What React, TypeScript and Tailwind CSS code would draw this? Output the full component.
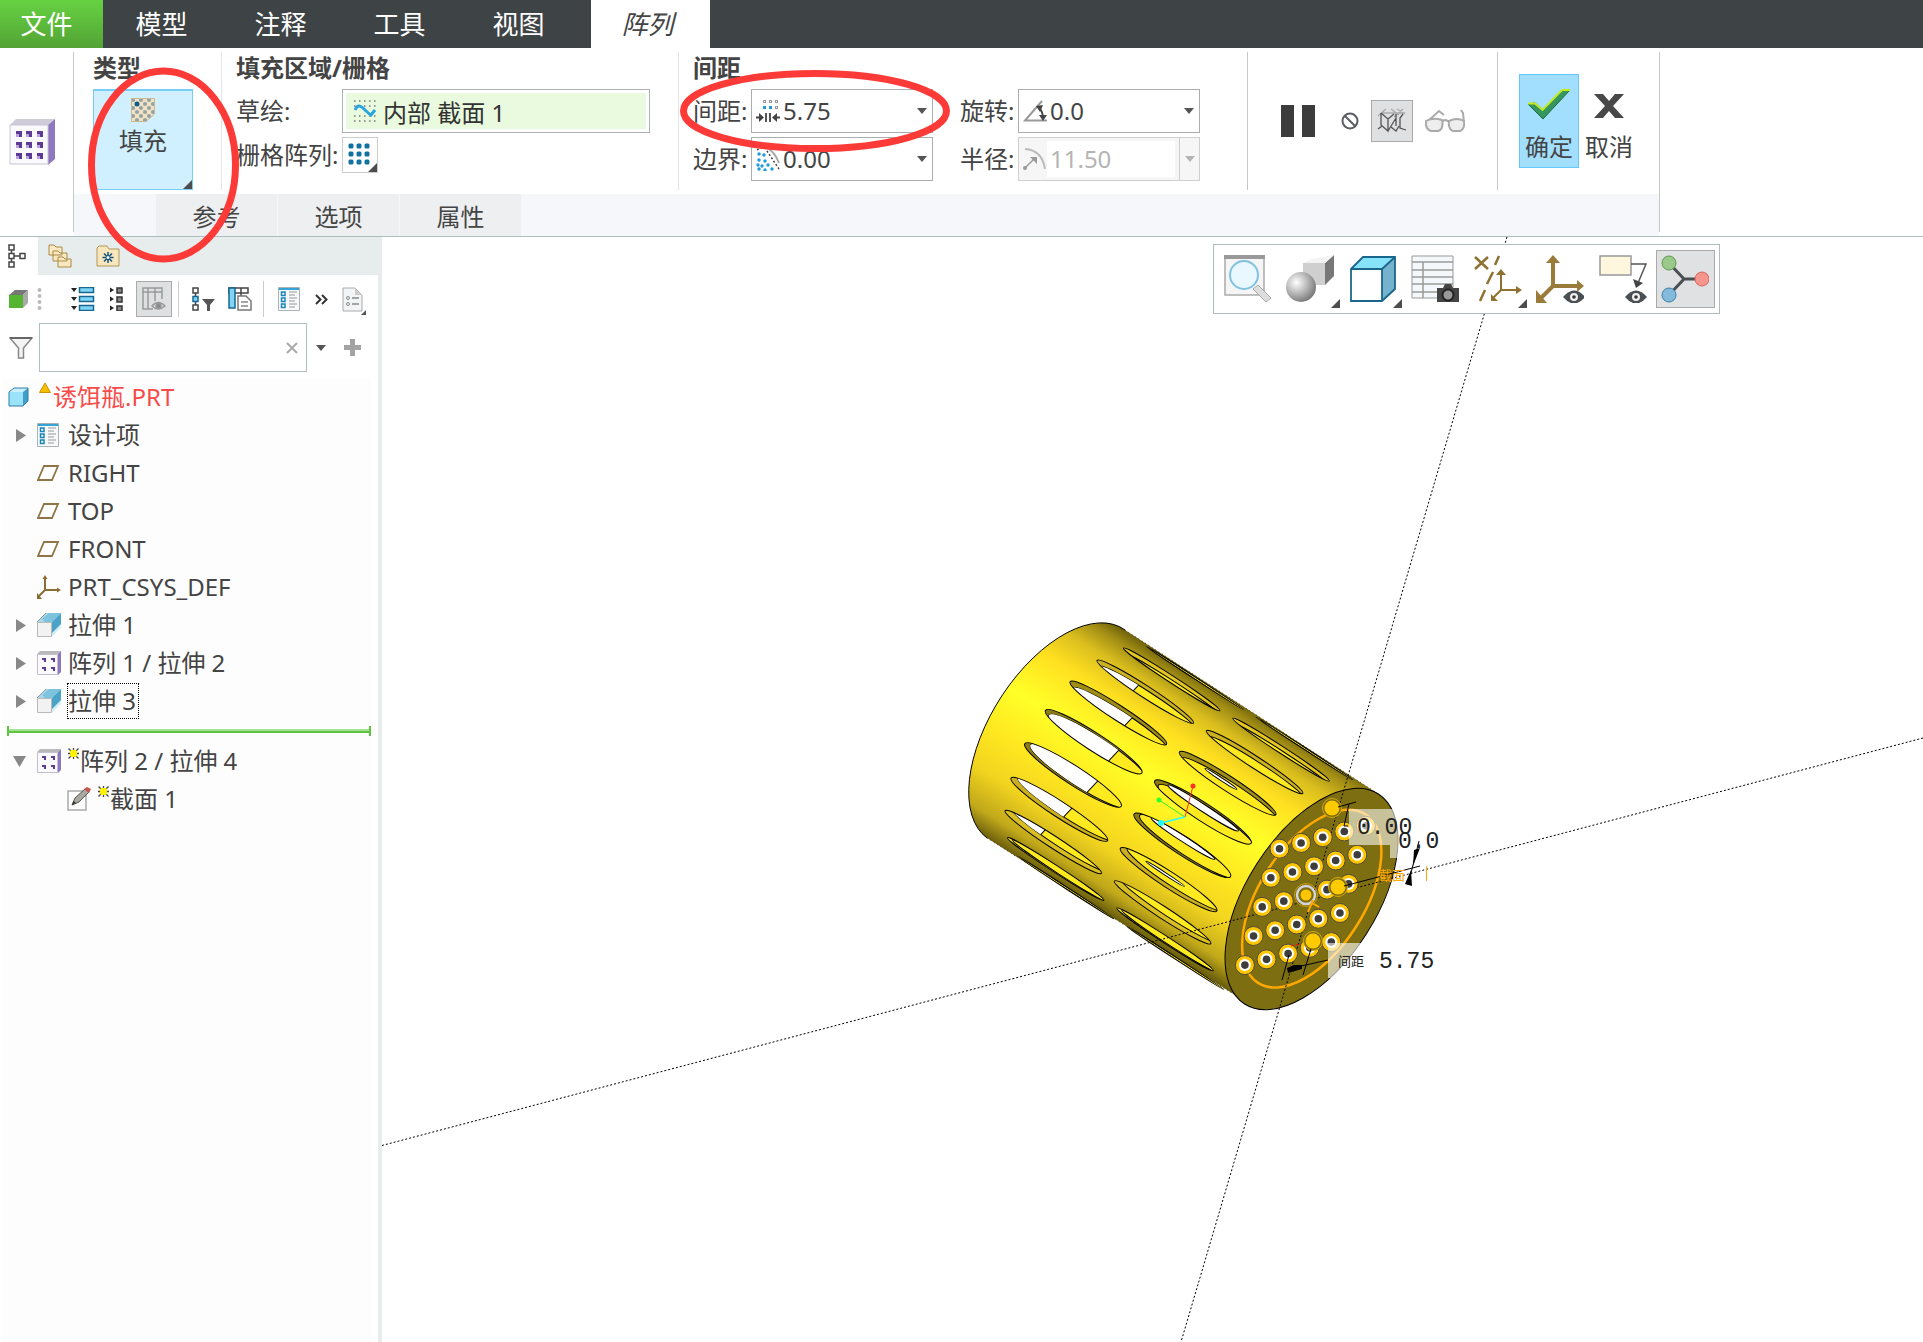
import React from 'react';

const ribbonTabs = ['模型', '注释', '工具', '视图'];

// First ring of slots on the cylinder wall; the second ring repeats it further along the axis
const slots = [
  { x: 1195, y: 678, ry: 1, shift: 0, wall: '#b8a21a', cut: null, lens: null },
  { x: 1171.7, y: 679.3, ry: 3.5, shift: 4, wall: '#e3c720', cut: null, lens: null },
  { x: 1145.3, y: 691.7, ry: 6, shift: 4, wall: '#cbb11e', cut: -10, lens: null },
  { x: 1118.3, y: 713, ry: 7.5, shift: 4, wall: '#a08d16', cut: 13, lens: [-8, 0, 19, 1.4] },
  { x: 1093.7, y: 741.7, ry: 9, shift: 2, wall: '#8d7c13', cut: 24, lens: [-2, -3.5, 42, 3.6] },
  { x: 1073, y: 775, ry: 9.3, shift: -2, wall: '#8d7c13', cut: 22, lens: [-3, -6, 38, 3] },
  { x: 1059.3, y: 809.3, ry: 8, shift: -4, wall: '#c9af1d', cut: 8, lens: [-6, -3, 23, 1.2] },
  { x: 1053.3, y: 842, ry: 6, shift: -5, wall: '#d8be20', cut: -15, lens: null },
  { x: 1055.7, y: 869, ry: 3.5, shift: -1, wall: '#ffe820', cut: null, lens: null },
  { x: 1066, y: 887.7, ry: 1, shift: 0, wall: '#ffe820', cut: null, lens: null },
];

const holes = Array.from({ length: 25 }, (_, i) => {
  const r = Math.floor(i / 5);
  const c = i % 5;
  return { x: 1279.5 + 21.6 * c - 8.65 * r, y: 848.7 - 5.75 * c + 29.1 * r };
}).filter((_, i) => i !== 12);

function Slot({ slot, ring }: { slot: (typeof slots)[number]; ring: number }) {
  const id = `slot-${ring}-${slot.x}`.replace('.', '_');
  return (
    <g transform={`translate(${slot.x + ring * 109.3} ${slot.y + ring * 70.3}) rotate(33)`}>
      <clipPath id={id}>
        <ellipse rx="57.5" ry={slot.ry} />
      </clipPath>
      <clipPath id={`${id}-in`}>
        <ellipse cx="5" cy={slot.shift} rx="57" ry={slot.ry} />
      </clipPath>
      <ellipse rx="57.5" ry={slot.ry} fill={slot.wall} />
      <g clipPath={`url(#${id})`}>
        <ellipse cx="5" cy={slot.shift} rx="57" ry={slot.ry} fill="#ffea20" stroke="#000" />
        {ring === 0 && slot.cut !== null && (
          <g clipPath={`url(#${id}-in)`}>
            <path d={`M-60-14H${slot.cut + 3}L${slot.cut - 2} 14H-60Z`} fill="#fff" stroke="#000" />
          </g>
        )}
        {ring === 1 && slot.lens && (
          <ellipse cx={slot.lens[0]} cy={slot.lens[1]} rx={slot.lens[2]} ry={slot.lens[3]} fill="#fff" stroke="#000" />
        )}
      </g>
      <ellipse rx="57.5" ry={slot.ry} fill="none" stroke="#000" />
    </g>
  );
}

function Model() {
  return (
    <svg className="absolute inset-0 h-full w-full" viewBox="382 237 1541 1105" preserveAspectRatio="xMinYMin meet">
      <defs>
        <linearGradient id="body" gradientUnits="userSpaceOnUse" x1="1125" y1="630" x2="993" y2="841">
          <stop offset="0" stopColor="#6e610c" />
          <stop offset="0.05" stopColor="#a18d14" />
          <stop offset="0.13" stopColor="#d9bd1e" />
          <stop offset="0.25" stopColor="#ffe020" />
          <stop offset="0.44" stopColor="#ffff28" />
          <stop offset="0.62" stopColor="#ffe820" />
          <stop offset="0.78" stopColor="#f2d41f" />
          <stop offset="0.92" stopColor="#c0a81a" />
          <stop offset="1" stopColor="#6e610c" />
        </linearGradient>
      </defs>

      {/* cylinder */}
      <path d="M1125 630L1380 795L1246 1002L987 838A124.5 66 -57.5 0 1 1125 630Z" fill="url(#body)" />
      <path d="M987 838A124.5 66 -57.5 0 1 1125 630" fill="none" stroke="#000" />
      <path d="M1125 630L1380 795M987 838L1246 1002" stroke="#000" strokeOpacity="0.6" strokeDasharray="1 3" />
      {slots.map((s) => <Slot key={s.x} slot={s} ring={0} />)}
      {slots.map((s) => <Slot key={s.x} slot={s} ring={1} />)}

      {/* front face */}
      <g transform="rotate(-57.5 1311.5 899)">
        <ellipse cx="1311.5" cy="899" rx="124.5" ry="65" fill="#7d6e12" stroke="#000" />
        <ellipse cx="1312" cy="899" rx="100" ry="52.5" fill="none" stroke="#ffa800" strokeWidth="2.5" />
      </g>

      {/* reference axes */}
      <path d="M1507 237L1181 1342M382 1145.5L1923 738" stroke="#000" strokeDasharray="2 2" />

      {holes.map((h) => (
        <g key={`${h.x}-${h.y}`}>
          <circle cx={h.x} cy={h.y} r="9.5" fill="#ffc600" stroke="#4e4b3c" />
          <circle cx={h.x} cy={h.y} r="6" fill="#fff" />
          <circle cx={h.x} cy={h.y} r="3.8" fill="#3d3d3d" />
        </g>
      ))}
      <circle cx="1306" cy="895" r="9" fill="#7d6e12" stroke="#d4d4dc" strokeWidth="2.5" />
      <circle cx="1306" cy="895" r="11.5" fill="none" stroke="#c99c0c" />
      <circle cx="1306" cy="895" r="5.5" fill="#ffc600" />
      <path d="M1308 912L1313 900M1312 903L1319 907" stroke="#ffa800" strokeWidth="2" />
      {[[1332, 808], [1338, 887], [1313, 941]].map(([x, y]) => (
        <g key={x}>
          <circle cx={x} cy={y} r="9.5" fill="#7d6e12" stroke="#d9a90a" />
          <circle cx={x} cy={y} r="7.5" fill="#ffcb00" />
        </g>
      ))}

      {/* label plates */}
      <path d="M1349 809H1400V858H1390V845H1349Z" fill="#fff" fillOpacity="0.58" />
      <path d="M1328 943H1363V978H1328Z" fill="#fff" fillOpacity="0.6" />

      {/* dimension leaders */}
      <g stroke="#000" fill="none">
        <path d="M1338 807L1356 802M1349 804L1344 826H1348M1344 886L1420 866M1419 841L1408 885" />
        <path d="M1289 955L1282 980M1311 949L1303 975M1288 969L1328 960" />
      </g>
      <path d="M1414 850L1420 848L1413 866ZM1411 870L1412 886L1405 884ZM1287 968L1294 965H1302V969L1288 973Z" />
      <path d="M1291 946L1301 944" stroke="#f00" strokeDasharray="3 2" />

      <g className="font-['Liberation_Mono','Noto_Sans_CJK_SC',monospace]" fontSize="23" fill="#222">
        <text x="1357" y="834">0.00</text>
        <text x="1398" y="848">0.0</text>
        <text x="1379" y="968">5.75</text>
        <text x="1338" y="966" fontSize="13">间距</text>
        <text x="1379" y="880" fontSize="13" fill="#ffa800">截面</text>
      </g>
      <path d="M1426.500 866V881" stroke="#ffa800" />

      {/* spin centre */}
      <path d="M1185 817L1193 786" stroke="#ff3028" />
      <path d="M1185 817L1159 800" stroke="#30e830" />
      <path d="M1185 817L1161 823" stroke="#20ffff" strokeWidth="1.5" />
      <circle cx="1193" cy="786" r="2.5" fill="#ff3028" />
      <circle cx="1159" cy="800" r="2.5" fill="#30ff30" />
      <circle cx="1161" cy="823" r="3" fill="#20ffff" />
    </svg>
  );
}

const Caret = ({ color = '#555' }: { color?: string }) => (
  <svg className="pointer-events-none shrink-0" width="10" height="6" viewBox="0 0 10 6"><path d="M0 0H10L5 6Z" fill={color} /></svg>
);

const Corner = () => (
  <svg className="absolute right-0 bottom-0" width="9" height="9" viewBox="0 0 9 9"><path d="M9 0V9H0Z" fill="#4d4d4d" /></svg>
);

const Divider = ({ light = false }: { light?: boolean }) => (
  <div className={light ? 'my-1 w-px bg-[#e3e6e8]' : 'my-1 w-px bg-[#c3c8ca]'} />
);

type ComboProps = { id: string; label: string; value: string; icon: React.ReactNode; disabled?: boolean };

function Combo({ id, label, value, icon, disabled }: ComboProps) {
  return (
    <div className="flex h-11 items-center">
      <label htmlFor={id} className="w-[58px] whitespace-nowrap">{label}</label>
      <div className={disabled
        ? 'relative flex h-full w-[182px] items-center border border-[#cfcfcf] bg-[#f6f6f6] pl-1'
        : 'relative flex h-full w-[182px] items-center border border-[#adadad] bg-white pl-1'}
      >
        {icon}
        <select
          id={id}
          disabled={disabled}
          className="h-9 min-w-0 flex-1 appearance-none bg-white pl-[3px] text-[#444] outline-none disabled:text-[#b4b4b4]"
        >
          <option>{value}</option>
        </select>
        <span className={disabled ? 'ml-1 flex h-full w-5 items-center justify-center border-l border-[#cfcfcf]' : 'flex w-5 items-center justify-center'}>
          <Caret color={disabled ? '#b4b4b4' : '#555'} />
        </span>
      </div>
    </div>
  );
}

const SpacingIcon = () => (
  <svg className="shrink-0" width="24" height="24" viewBox="0 0 24 24">
    {[8, 14, 20].map((x) => <rect key={x} x={x - 0.5} y="1.500" width="2" height="2" fill="none" stroke="#999" />)}
    <path d="M7 7h3v3H7zM13 7h3v3h-3z" fill="#1f9bd9" />
    <rect x="19.500" y="7.500" width="2" height="2" fill="none" stroke="#999" />
    <path d="M10 14V23M14 14V23" stroke="#555" strokeWidth="2" />
    <path d="M0 18.500H5M19 18.500H24" stroke="#444" strokeWidth="2" />
    <path d="M3 14L8 18.500L3 23ZM21 14L16 18.500L21 23Z" fill="#444" />
  </svg>
);

const BorderIcon = () => (
  <svg className="shrink-0" width="24" height="24" viewBox="0 0 24 24">
    <path d="M9 0Q18 3 23 16" fill="none" stroke="#aaa" strokeWidth="2" />
    <path d="M1 3L4 1H9L23 22" fill="none" stroke="#444" strokeWidth="1.500" strokeDasharray="2 2" />
    {[[3, 7], [8, 8], [3, 13], [9, 14], [2, 18], [6, 19], [12, 18], [3, 22], [9, 23], [16, 22]].map(([x, y]) => (
      <circle key={`${x}-${y}`} cx={x} cy={y} r="1.700" fill="#1f9bd9" />
    ))}
  </svg>
);

const AngleIcon = () => (
  <svg className="shrink-0" width="24" height="24" viewBox="0 0 24 24">
    <path d="M19 2L2 21.500H24" fill="none" stroke="#999" strokeWidth="2" />
    <path d="M15 8Q20 12 20 19" fill="none" stroke="#444" strokeWidth="2" />
    <path d="M13 7L20 6L17 13ZM16 16H24L20 22Z" fill="#444" />
  </svg>
);

const RadiusIcon = () => (
  <svg className="shrink-0" width="24" height="24" viewBox="0 0 24 24">
    <path d="M2 2Q19 3 22 22" fill="none" stroke="#bbb" strokeWidth="2" />
    <path d="M2 21L12 11" stroke="#999" strokeWidth="1.500" />
    <path d="M7 10H14V17Z" fill="#999" />
    <circle cx="2" cy="21" r="2" fill="#999" />
  </svg>
);

function Ribbon() {
  return (
    <section className="flex h-[189px] border-b border-[#aebcbd] bg-white text-2xl leading-6 text-[#444]">
      <div className="flex w-[73px] items-center pl-[9px]">
        <svg width="46" height="46" viewBox="0 0 46 46">
          <path d="M1 6L7 0H46L39 6Z" fill="#cfcbd8" />
          <path d="M39 6L46 0V40L39 46Z" fill="#8f78bd" />
          <path d="M1 6H39V45H1Z" fill="#fafafc" stroke="#c9c4d6" />
          {[12, 23, 34].map((y) => [7, 17, 28].map((x) => (
            <g key={`${x}-${y}`}>
              <rect x={x} y={y} width="6" height="6" fill="#b7a6dc" />
              <path d={`M${x} ${y}h6v6h-3v-3h-3z`} fill="#5d3a96" />
            </g>
          )))}
        </svg>
      </div>
      <Divider />
      <div className="flex flex-col">
        <div className="flex h-[146px]">
          <div className="w-[147px] pt-2 pl-[19px]">
            <h2 className="mb-[9px] font-bold">类型</h2>
            <button className="relative flex h-[101px] w-[100px] flex-col items-center border border-t-2 border-[#78cdf7] bg-[#d0f0ff] pt-[7px]">
              <svg width="24" height="24" viewBox="0 0 24 24">
                <path d="M0 0H24V16L15 24H0Z" fill="#f3e3c4" />
                {[0, 1, 2, 3, 4, 5].map((r) => [0, 1, 2].map((c) => {
                  const x = 2 + c * 8 + (r % 2) * 4;
                  const y = 2 + r * 4;
                  return x < 24 && x + y < 38 ? <circle key={`${r}-${c}`} cx={x} cy={y} r="2.100" fill="#94a3a6" /> : null;
                }))}
                <circle cx="6" cy="6" r="2.500" fill="#0d5e8a" />
                <path d="M0.500 0.500H23.500V16L15 23.500H0.500Z" fill="none" stroke="#c9b892" />
              </svg>
              <span className="mt-[7px]">填充</span>
              <Corner />
            </button>
          </div>
          <Divider light />
          <div className="w-[456px] pt-2 pl-[14px]">
            <h2 className="mb-[9px] font-bold">填充区域/栅格</h2>
            <div className="flex h-11 items-center">
              <label htmlFor="sketch" className="w-[106px]">草绘:</label>
              <div className="flex h-full w-[308px] border border-[#adb1b3] bg-white p-[3px]">
                <div className="flex flex-1 items-center gap-[7px] bg-[#e9fade] pl-2">
                  <svg className="shrink-0" width="22" height="22" viewBox="0 0 22 22">
                    {[1, 6, 16, 21].map((y) => <path key={y} d={`M0 ${y}H22`} stroke="#777" strokeWidth="1.500" strokeDasharray="1.500 3.500" />)}
                    <path d="M1 10Q4 3 9 8T17 15L21 10" fill="none" stroke="#2ba5dd" strokeWidth="3" />
                  </svg>
                  <input id="sketch" readOnly defaultValue="内部 截面 1" className="h-8 w-full min-w-0 bg-transparent text-[#333] outline-none" />
                </div>
              </div>
            </div>
            <div className="mt-1 flex h-9 items-center">
              <span className="w-[106px] whitespace-nowrap">栅格阵列:</span>
              <button aria-label="栅格阵列" className="relative flex h-9 w-9 items-center justify-center border border-[#ccc] bg-white pr-[2px] pb-[2px]">
                <svg width="22" height="22" viewBox="0 0 22 22">
                  {[3, 11, 19].map((y) => [3, 11, 19].map((x) => <rect key={`${x}-${y}`} x={x - 2.5} y={y - 2.5} width="5" height="5" rx="1.500" fill="#11719f" />))}
                </svg>
                <Corner />
              </button>
            </div>
          </div>
          <Divider light />
          <div className="w-[568px] pt-2 pl-[14px]">
            <h2 className="mb-[9px] font-bold">间距</h2>
            <div className="flex gap-[27px]">
              <div className="flex flex-col gap-1">
                <Combo id="spacing" label="间距:" value="5.75" icon={<SpacingIcon />} />
                <Combo id="border" label="边界:" value="0.00" icon={<BorderIcon />} />
              </div>
              <div className="flex flex-col gap-1">
                <Combo id="rotation" label="旋转:" value="0.0" icon={<AngleIcon />} />
                <Combo id="radius" label="半径:" value="11.50" icon={<RadiusIcon />} disabled />
              </div>
            </div>
          </div>
          <Divider />
          <div className="flex w-[249px] items-center gap-3 pl-[33px]">
            <button aria-label="暂停" className="mr-[14px]">
              <svg width="34" height="32" viewBox="0 0 34 32"><path d="M0 0H13V32H0ZM21 0H34V32H21Z" fill="#3c3c3c" /></svg>
            </button>
            <button aria-label="无预览">
              <svg width="18" height="18" viewBox="0 0 18 18" fill="none" stroke="#5a5d63" strokeWidth="2"><circle cx="9" cy="9" r="7.500" /><path d="M4 4L14 14" /></svg>
            </button>
            <button aria-label="分离" className="flex h-[42px] w-[42px] items-center justify-center border border-[#aaa] bg-[#dfe0e2]">
              <svg width="30" height="26" viewBox="0 0 30 26" fill="none">
                <path d="M1 8L9 1M5 5H28M14 1L22 7M26 1L17 9M20 1L28 6" stroke="#aaa" strokeWidth="1.300" />
                <path d="M4 5V17L11 23V11L4 5M11 11L17 6M11 23L19 10M14 19L19 23L22 18M19 6V18M26 6L23 10V20L29 22M1 21L5 18" stroke="#555" strokeWidth="1.300" />
              </svg>
            </button>
            <button aria-label="预览">
              <svg width="40" height="24" viewBox="0 0 40 24" fill="none" stroke="#aaa" strokeWidth="2">
                <path d="M2 13L14 2L19 6M36 1L38 4L39 14" />
                <path d="M1 12Q8 8 17 11Q19 20 13 22H6Q0 20 1 12ZM24 12Q32 8 39 12Q40 20 35 22H28Q23 20 24 12ZM17 13Q20 9 24 13" fill="#eee" />
              </svg>
            </button>
          </div>
          <Divider />
          <div className="flex items-center pr-5 pl-[21px]">
            <button className="flex h-[94px] w-[60px] flex-col items-center justify-end gap-[15px] border border-[#66c8fa] bg-[#a2dfff] pb-2">
              <svg width="44" height="31" viewBox="0 0 44 31">
                <path d="M1 15L8 14L16 21L35 1H43L16 30Z" fill="#35965e" stroke="#1b6b3c" />
                <path d="M1 14.500H8L15.500 21L35 1H43" fill="none" stroke="#c4ea1c" strokeWidth="2" />
              </svg>
              <span>确定</span>
            </button>
            <button className="flex h-[94px] w-[60px] flex-col items-center justify-end gap-[17px] pb-[9px]">
              <svg width="30" height="24" viewBox="0 0 30 24"><path d="M0 0H9L15 7L21 0H30L19 12L30 24H21L15 17L9 24H0L11 12Z" fill="#484848" /></svg>
              <span>取消</span>
            </button>
          </div>
        </div>
        <div className="flex h-[42px] gap-px bg-[#f6f7fa] pl-[82px]">
          {['参考', '选项', '属性'].map((t) => (
            <button key={t} className="w-[121px] bg-[#eeeff1] pt-1">{t}</button>
          ))}
        </div>
      </div>
      <Divider />
    </section>
  );
}

const ListIcon = () => (
  <svg className="shrink-0" width="22" height="24" viewBox="0 0 22 24">
    <path d="M0.500 0.500H21.500V23.500H0.500Z" fill="#f8f9fa" stroke="#aab2b6" />
    <path d="M1 2H21" stroke="#36a3d5" strokeWidth="2" />
    {[6, 12, 18].map((y) => (
      <g key={y}>
        <rect x="3.500" y={y - 1} width="3.500" height="3.500" fill="none" stroke="#1985b8" strokeWidth="1.500" />
        <path d={`M11 ${y - 1}H19M11 ${y + 2}H17`} stroke="#999" />
      </g>
    ))}
  </svg>
);

const PlaneIcon = () => (
  <svg className="shrink-0" width="24" height="24" viewBox="0 0 24 24"><path d="M7 5H21L15 19H1Z" fill="#fff" stroke="#8f7445" strokeWidth="1.800" /></svg>
);

const CsysIcon = () => (
  <svg className="shrink-0" width="24" height="24" viewBox="0 0 24 24" fill="none" stroke="#8a6d33" strokeWidth="2">
    <path d="M8 2V15H22M8 15L1 22" /><path d="M8 0L10.500 4H5.500ZM24 15L20 12.500V17.500ZM0 18V24H5Z" fill="#8a6d33" stroke="none" />
  </svg>
);

const ExtrudeIcon = () => (
  <svg className="shrink-0" width="24" height="24" viewBox="0 0 24 24">
    <path d="M0 9L9 0H24L15 9Z" fill="#a9d8ea" /><path d="M5 6L12 0H24L15 9H8Z" fill="#7dc3de" />
    <path d="M15 9L24 0V13L15 23Z" fill="#4ba3c7" /><path d="M24 11V15L15 23V20Z" fill="#d4eef8" />
    <path d="M0 9L9 0" stroke="#999" />
    <path d="M0.500 9.500H14.500V23.500H0.500Z" fill="#f2f2f2" stroke="#b9b9b9" />
  </svg>
);

const PatternIcon = () => (
  <svg className="shrink-0" width="24" height="24" viewBox="0 0 24 24">
    <path d="M0 3L3 0H24L21 3Z" fill="#b9b9b9" /><path d="M21 3L24 0V21L21 24Z" fill="#8f78bd" />
    <path d="M0.500 3.500H20.500V23.500H0.500Z" fill="#fafafc" stroke="#c4bfcf" />
    <path d="M5 7h4v4h-2v-2h-2zM14 7h4v4h-2v-2h-2zM5 16h4v4h-2v-2h-2zM14 16h4v4h-2v-2h-2z" fill="#5d3a96" />
  </svg>
);

const SectionIcon = () => (
  <svg className="shrink-0" width="24" height="24" viewBox="0 0 24 24">
    <path d="M1 4H19V23H1Z" fill="#fdfdfd" stroke="#aaa" strokeWidth="1.500" />
    <path d="M5 18L8 11L18 2L22 5L12 15Z" fill="#aaa89f" stroke="#555" /><path d="M17 2L20 0L24 2L22 6Z" fill="#c5554b" /><path d="M5 18L6.500 14L9 16Z" fill="#333" />
  </svg>
);

const NewMark = () => (
  <svg className="mb-4 shrink-0" width="11" height="11" viewBox="0 0 11 11">
    <path d="M0.500 0.500L10.500 10.500M10.500 0.500L0.500 10.500M5.500 0V11M0 5.500H11" stroke="#444" strokeWidth="1.300" /><rect x="2" y="2" width="7" height="7" rx="2" fill="#fff200" />
  </svg>
);

const treeItems = [
  { text: '设计项', icon: <ListIcon />, expand: true },
  { text: 'RIGHT', icon: <PlaneIcon /> },
  { text: 'TOP', icon: <PlaneIcon /> },
  { text: 'FRONT', icon: <PlaneIcon /> },
  { text: 'PRT_CSYS_DEF', icon: <CsysIcon /> },
  { text: '拉伸 1', icon: <ExtrudeIcon />, expand: true },
  { text: '阵列 1 / 拉伸 2', icon: <PatternIcon />, expand: true },
  { text: '拉伸 3', icon: <ExtrudeIcon />, expand: true, focused: true },
];

function Sidebar() {
  return (
    <aside className="flex w-[382px] shrink-0 flex-col border-r-4 border-[#e7eded] bg-white">
      <nav className="-mr-1 flex h-[38px] bg-[#e7eded]">
        <button aria-label="模型树" className="w-[38px] bg-white pl-2">
          <svg width="18" height="24" viewBox="0 0 18 24" fill="none" stroke="#444" strokeWidth="1.500">
            <path d="M1 1H6V6H1ZM1 9.500H6V14.500H1ZM1 18H6V23H1ZM12 9.500H17V14.500H12ZM3.500 6V9.500M3.500 14.500V18M6 12H12" />
          </svg>
        </button>
        <button aria-label="文件夹浏览器" className="ml-[10px]">
          <svg width="24" height="24" viewBox="0 0 24 24" fill="#f9e8c0" stroke="#a98a4c">
            <path d="M1 1H6L8 3H14V11H1ZM5 7H10L12 9H19V17H5ZM10 13H15L17 15H23V23H10Z" />
          </svg>
        </button>
        <button aria-label="收藏夹" className="ml-6">
          <svg width="24" height="22" viewBox="0 0 24 22">
            <path d="M1 3L3 1H11L13 4H23V21H1Z" fill="#f8e6bd" stroke="#b3955a" />
            <path d="M12 7V18M6.500 12.500H17.500M8 8.500L16 16.500M16 8.500L8 16.500" stroke="#12547c" strokeWidth="1.500" /><circle cx="12" cy="12.500" r="1.500" fill="#fff" />
          </svg>
        </button>
      </nav>

      <div className="flex h-12 items-center pl-[9px]">
        <button aria-label="模型">
          <svg width="20" height="20" viewBox="0 0 20 20"><path d="M0 6L6 1H19L14 6Z" fill="#777" /><path d="M14 6L19 1V14L14 19Z" fill="#aaa" /><path d="M0 6H14V19H0Z" fill="#55b531" /></svg>
        </button>
        <svg className="ml-2" width="5" height="24" viewBox="0 0 5 24" fill="#bbb"><circle cx="2.500" cy="3" r="2" /><circle cx="2.500" cy="9" r="2" /><circle cx="2.500" cy="15" r="2" /><circle cx="2.500" cy="21" r="2" /></svg>
        <button aria-label="全部展开" className="ml-[29px]">
          <svg width="24" height="24" viewBox="0 0 24 24">
            {[3, 12, 21].map((y) => <g key={y}><path d={`M0 ${y - 2}h6l-3 4z`} fill="#222" /><rect x="8.500" y={y - 2.5} width="14" height="5" fill="#7fd4f7" stroke="#17678e" strokeWidth="1.500" /></g>)}
          </svg>
        </button>
        <button aria-label="全部折叠" className="ml-[15px]">
          <svg width="13" height="24" viewBox="0 0 13 24">
            {[3, 12, 21].map((y) => <g key={y}><path d={`M0 ${y - 2.5}l4 2.500l-4 2.500z`} fill="#222" /><rect x="7" y={y - 2} width="5" height="5" fill="#888" stroke="#333" strokeWidth="1.500" /></g>)}
          </svg>
        </button>
        <button aria-label="树列" className="ml-[13px] flex h-9 w-9 items-center justify-center border border-[#aaa] bg-[#dfe0e2]">
          <svg width="24" height="24" viewBox="0 0 24 24" fill="none" stroke="#999" strokeWidth="1.500">
            <path d="M1 1H20V5H1ZM1 5V22H6V1M13 1V14M20 5V12M6 22H11" /><path d="M10 19Q16 12 23 19Q16 25 10 19Z" fill="#dfe0e2" /><circle cx="16.500" cy="19" r="2.500" fill="#888" />
          </svg>
        </button>
        <div className="ml-[6px] h-9 w-px bg-[#ccc]" />
        <button aria-label="树过滤器" className="ml-[13px]">
          <svg width="24" height="24" viewBox="0 0 24 24" fill="none" stroke="#444" strokeWidth="1.500">
            <path d="M1 1H6V6H1ZM1 18H6V23H1ZM3.500 6V18" /><path d="M1 9.500H6V14.500H1Z" fill="#7fd4f7" stroke="#17678e" /><path d="M10 12H23L18 18V24H15V18Z" fill="#555" stroke="none" />
          </svg>
        </button>
        <button aria-label="列设置" className="ml-3">
          <svg width="24" height="24" viewBox="0 0 24 24" fill="none" stroke="#444" strokeWidth="1.500">
            <path d="M1 1H20V6H1ZM13 1V9" /><path d="M1 1H7V21H1Z" fill="#7fd4f7" stroke="#17678e" /><path d="M10 9H18L23 14V23H10Z" fill="#fff" stroke="#777" /><path d="M13 15H20M13 19H20" stroke="#888" />
          </svg>
        </button>
        <div className="ml-[11px] h-9 w-px bg-[#ccc]" />
        <button aria-label="设计项" className="ml-[14px]"><ListIcon /></button>
        <button aria-label="更多" className="ml-[15px]">
          <svg width="13" height="11" viewBox="0 0 13 11" fill="none" stroke="#333" strokeWidth="2"><path d="M1 1L5.500 5.500L1 10M7 1L11.500 5.500L7 10" /></svg>
        </button>
        <button aria-label="设置" className="relative ml-[14px] h-8 w-6">
          <svg width="21" height="25" viewBox="0 0 21 25"><path d="M1 1H13L20 8V24H1Z" fill="#f3f4f5" stroke="#aaa" /><path d="M13 1V8H20" fill="#ccc" /><g fill="none" stroke="#888"><circle cx="6" cy="11" r="1.500" /><circle cx="6" cy="17" r="1.500" /><path d="M10 11H17M10 17H17" strokeWidth="1.500" /></g></svg>
          <svg className="absolute right-0 bottom-0" width="5" height="5" viewBox="0 0 5 5"><path d="M5 0V5H0Z" fill="#555" /></svg>
        </button>
      </div>

      <div className="flex h-[49px] items-center pl-[9px]">
        <svg width="24" height="22" viewBox="0 0 24 22"><path d="M1 1H23L14.500 11V21H9.500V11Z" fill="#f4f4f4" stroke="#888" strokeWidth="1.500" /><path d="M1 1H23" stroke="#666" strokeWidth="2" /></svg>
        <div className="ml-[6px] flex h-full w-[268px] items-center border border-[#b2bdbf] bg-white pr-2">
          <input aria-label="搜索" className="h-full min-w-0 flex-1 bg-transparent px-2 outline-none" />
          <button aria-label="清除"><svg width="12" height="12" viewBox="0 0 12 12" stroke="#aaa" strokeWidth="2"><path d="M1 1L11 11M11 1L1 11" /></svg></button>
        </div>
        <button aria-label="搜索选项" className="ml-[9px]"><Caret /></button>
        <button aria-label="添加" className="ml-[18px]"><svg width="17" height="17" viewBox="0 0 17 17"><path d="M6 0H11V6H17V11H11V17H6V11H0V6H6Z" fill="#a3a3a3" /></svg></button>
      </div>

      <div className="mt-[6px] mr-[7px] ml-[3px] flex-1 bg-[#fdfdfd] text-2xl leading-6 text-[#444]">
        <div className="flex h-[38px] items-center pl-[5px] text-[#f94a4a]">
          <svg width="21" height="20" viewBox="0 0 21 20"><path d="M1 5L6 1H20L15 5Z" fill="#c9f0fc" /><path d="M15 5L20 1V14L15 19Z" fill="#3f9fc9" /><path d="M1 5H15V19H1Z" fill="#9be3fb" /><path d="M1 5L6 1H20V14L15 19H1Z" fill="none" stroke="#2e7da3" /></svg>
          <svg className="mb-5 ml-[10px]" width="12" height="11" viewBox="0 0 12 11"><path d="M6 1L11.500 10.500H0.500Z" fill="#f5bd00" stroke="#c99400" /></svg>
          <span className="ml-[2px]">诱饵瓶.PRT</span>
        </div>
        {treeItems.map((item) => (
          <div key={item.text} className="flex h-[38px] items-center pl-[13px]">
            <span className="w-[21px]">
              {item.expand && <svg width="10" height="13" viewBox="0 0 10 13"><path d="M0 0L10 6.500L0 13Z" fill="#888" /></svg>}
            </span>
            <span className="flex w-[30px]">{item.icon}</span>
            <span className={item.focused ? 'flex h-9 items-center border border-dotted border-black pr-[2px]' : 'flex h-9 items-center border border-transparent'}>{item.text}</span>
          </div>
        ))}
        <div className="flex h-[22px] items-center pl-1">
          <div className="flex h-[10px] w-full items-center border-x-2 border-[#5dc53f]"><div className="h-1 w-full border-b-2 border-[#5dc53f] bg-[#a5e094]" /></div>
        </div>
        <div className="flex h-[38px] items-center pl-[10px]">
          <svg width="13" height="11" viewBox="0 0 13 11"><path d="M0 0H13L6.500 11Z" fill="#888" /></svg>
          <span className="ml-[11px] flex w-[31px]"><PatternIcon /></span>
          <NewMark />
          <span className="ml-px">阵列 2 / 拉伸 4</span>
        </div>
        <div className="flex h-[38px] items-center pl-16">
          <span className="flex w-[31px]"><SectionIcon /></span>
          <NewMark />
          <span className="ml-px">截面 1</span>
        </div>
      </div>
    </aside>
  );
}

const Eye = ({ x, y }: { x: number; y: number }) => (
  <g transform={`translate(${x} ${y})`}><path d="M-11 0Q0-13 11 0Q0 13-11 0Z" fill="#4a4f54" /><circle r="4" fill="#eee" /><circle r="1.800" fill="#333" /></g>
);

const viewTools = [
  {
    name: '重新调整',
    art: (
      <>
        <path d="M1 1H40V40H1Z" fill="#f5f5f6" stroke="#aaa" strokeWidth="1.500" /><path d="M0 2H41" stroke="#999" strokeWidth="4" />
        <path d="M29 34L34 30L47 43L42 47Z" fill="#ddd" stroke="#aaa" /><circle cx="20" cy="20" r="14" fill="#e9f8fe" stroke="#7dc3e0" strokeWidth="2" />
      </>
    ),
  },
  {
    name: '渲染选项',
    menu: true,
    art: (
      <>
        <path d="M17 8H39V30H17Z" fill="#cfcfcf" /><path d="M39 8L48 0V21L39 30Z" fill="#777" /><path d="M17 8L26 4L48 0L39 8Z" fill="#f3f3f3" />
        <circle cx="15" cy="32" r="15" fill="url(#ball)" />
      </>
    ),
  },
  {
    name: '显示样式',
    menu: true,
    art: (
      <>
        <path d="M2 14L14 2H46L33 14Z" fill="#87e3fa" /><path d="M33 14L46 2V34L33 46Z" fill="#74b3cb" /><path d="M2 14H33V46H2Z" fill="#fff" />
        <path d="M2 14L14 2H46V34L33 46H2ZM2 14H33L46 2M33 14V46" fill="none" stroke="#1b668c" strokeWidth="1.800" />
      </>
    ),
  },
  {
    name: '视图管理器',
    art: (
      <>
        <path d="M1 1H42V43H1Z" fill="#f4f8fa" stroke="#999" /><path d="M1 7H42M1 15H42M1 22H42M1 29H42M1 37H42M12 7V43" stroke="#999" strokeWidth="1.500" />
        <path d="M26 33H32L34 29H40L42 33H48V47H26Z" fill="#444" /><circle cx="37" cy="40" r="5.500" fill="#999" stroke="#222" strokeWidth="2" />
      </>
    ),
  },
  {
    name: '基准显示',
    menu: true,
    art: (
      <g fill="none" stroke="#8f7132" strokeWidth="2">
        <path d="M1 2L14 14M14 2L1 14M25 1L21 10M19 17L13 29M11 35L6 46" strokeWidth="2.500" /><path d="M27 18V35H45M27 35L18 44" />
        <path d="M27 14L32 20H22ZM48 35L42 31V39ZM17 39V46H24Z" fill="#8f7132" stroke="none" />
      </g>
    ),
  },
  {
    name: '坐标系显示',
    art: (
      <>
        <path d="M17 4V31H43M17 31L4 44" fill="none" stroke="#9b7b39" strokeWidth="4" /><path d="M17 0L24 8H10ZM48 31L41 25V37ZM0 35V48H11Z" fill="#9b7b39" />
        <Eye x={38} y={42} />
      </>
    ),
  },
  {
    name: '注释显示',
    art: (
      <>
        <path d="M1 1H32V20H1Z" fill="#fff6de" stroke="#999" strokeWidth="1.500" /><path d="M32 9H47L39 28" fill="none" stroke="#555" strokeWidth="1.500" /><path d="M34 24L44 28L37 33Z" fill="#444" />
        <Eye x={37} y={42} />
      </>
    ),
  },
  {
    name: '旋转中心',
    active: true,
    art: (
      <>
        <path d="M7 7L23 24L7 41M23 24H42" fill="none" stroke="#4a4f54" strokeWidth="3" />
        <circle cx="8" cy="8" r="7" fill="#9ac98a" stroke="#5d9a4f" /><circle cx="8" cy="40" r="7" fill="#84bbdc" stroke="#3d7fa6" /><circle cx="41" cy="24" r="7" fill="#f5958c" stroke="#d6665d" />
      </>
    ),
  },
];

function ViewToolbar() {
  return (
    <div className="relative z-10 flex w-[507px] items-center justify-between border border-[#aebcbd] bg-white px-1 py-[5px]">
      {viewTools.map((tool) => (
        <button
          key={tool.name}
          aria-label={tool.name}
          className={tool.active
            ? 'relative flex h-[58px] w-[59px] items-center justify-center border border-[#aaa] bg-[#dfe1e3]'
            : 'relative flex h-[58px] w-[59px] items-center justify-center'}
        >
          <svg width="48" height="48" viewBox="0 0 48 48">
            <defs><radialGradient id="ball" cx="0.350" cy="0.350" r="0.700"><stop offset="0" stopColor="#fff" /><stop offset="1" stopColor="#777" /></radialGradient></defs>
            {tool.art}
          </svg>
          {tool.menu && <Corner />}
        </button>
      ))}
    </div>
  );
}

export default function App() {
  return (
    <div className="relative flex min-h-screen flex-col overflow-hidden bg-white font-['Noto_Sans','Noto_Sans_CJK_SC',sans-serif]">
      <header className="flex h-12 bg-[#3e4446] text-[26px] leading-8 text-white">
        <button className="w-[103px] bg-linear-to-b from-[#66d242] to-[#53a335] pr-[10px]">文件</button>
        {ribbonTabs.map((tab) => <button key={tab} className="w-[119px] pr-[2px]">{tab}</button>)}
        <button className="ml-3 w-[119px] bg-white pr-[6px] text-[#444] italic">阵列</button>
      </header>

      <Ribbon />

      <div className="flex flex-1">
        <Sidebar />
        <main className="relative flex flex-1 items-start justify-end overflow-hidden bg-white pt-[7px] pr-[203px]">
          <Model />
          <ViewToolbar />
        </main>
      </div>

      {/* hand-drawn markup over the ribbon */}
      <svg className="pointer-events-none absolute top-0 left-0 z-20" width="1000" height="280" viewBox="0 0 1000 280" fill="none" stroke="#fc3a37" strokeWidth="7">
        <ellipse cx="163.500" cy="165" rx="72" ry="94" />
        <ellipse cx="815" cy="111" rx="131.500" ry="37.500" />
      </svg>
    </div>
  );
}
